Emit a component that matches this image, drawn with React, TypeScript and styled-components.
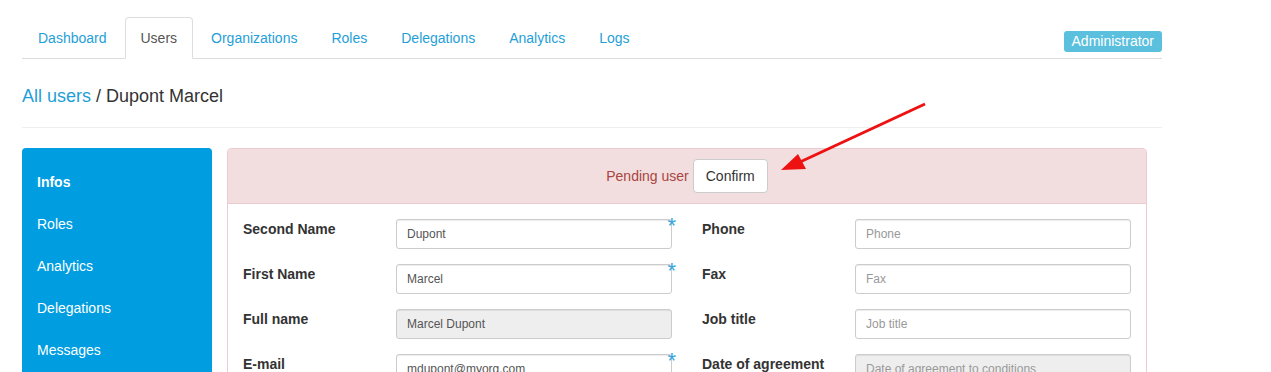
import React from "react";
import styled, { createGlobalStyle } from "styled-components";

const Global = createGlobalStyle`
  html, body { margin: 0; padding: 0; background: #fff; }
  body {
    font-family: "Liberation Sans", Arial, Helvetica, sans-serif;
    font-size: 14px;
    line-height: 20px;
    color: #333;
  }
  * { box-sizing: border-box; }
`;

const Page = styled.div`
  position: relative;
  width: 1162px;
  padding: 17px 0 0 22px;
`;

const Tabs = styled.nav`
  display: flex;
  align-items: flex-end;
  border-bottom: 1px solid #ddd;
`;

const Tab = styled.a<{ $active?: boolean }>`
  display: block;
  padding: 10px 15px;
  margin-right: 2px;
  margin-bottom: -1px;
  line-height: 20px;
  border: 1px solid ${(p) => (p.$active ? "#ddd" : "transparent")};
  border-bottom-color: ${(p) => (p.$active ? "#fff" : "transparent")};
  border-radius: 4px 4px 0 0;
  background: ${(p) => (p.$active ? "#fff" : "transparent")};
  color: ${(p) => (p.$active ? "#555" : "#1fa0d8")};
  text-decoration: none;
`;

const Badge = styled.span`
  margin-left: auto;
  margin-bottom: 6px;
  padding: 2px 8px 3px;
  font-size: 14px;
  line-height: 16px;
  color: #fff;
  background: #5bc0de;
  border-radius: 3px;
`;

const Breadcrumb = styled.div`
  padding: 27px 0 21px;
  font-size: 18px;
  line-height: 20px;
  color: #333;
  border-bottom: 1px solid #eee;
`;

const Crumb = styled.a`
  color: #1fa0d8;
  text-decoration: none;
`;

const Main = styled.div`
  display: flex;
  gap: 15px;
  margin-top: 20px;
  align-items: flex-start;
`;

const Sidebar = styled.ul`
  list-style: none;
  margin: 0;
  padding: 13px 0 40px;
  width: 190px;
  background: #009de0;
  border-radius: 4px;
`;

const SideItem = styled.li<{ $active?: boolean }>`
  padding: 11px 15px;
  line-height: 20px;
  color: #fff;
  font-weight: ${(p) => (p.$active ? 700 : 400)};
`;

const Panel = styled.section`
  width: 920px;
  border: 1px solid #ebccd1;
  border-radius: 4px;
`;

const PanelHeading = styled.div`
  display: flex;
  justify-content: center;
  align-items: center;
  gap: 4px;
  padding: 10px 15px;
  background: #f2dede;
  border-bottom: 1px solid #ebccd1;
  border-radius: 3px 3px 0 0;
`;

const Pending = styled.span`
  color: #a94442;
`;

const Button = styled.button`
  font-family: inherit;
  font-size: 14px;
  line-height: 20px;
  padding: 6px 12px;
  color: #333;
  background: #fff;
  border: 1px solid #ccc;
  border-radius: 4px;
`;

const PanelBody = styled.div`
  display: grid;
  grid-template-columns: 429px 429px;
  column-gap: 30px;
  row-gap: 15px;
  padding: 15px;
`;

const Field = styled.div`
  display: grid;
  grid-template-columns: 153px 276px;
`;

const Label = styled.label`
  font-weight: 700;
  line-height: 20px;
`;

const InputWrap = styled.div`
  position: relative;
`;

const Input = styled.input`
  display: block;
  width: 100%;
  height: 30px;
  padding: 5px 10px;
  font-family: inherit;
  font-size: 12px;
  color: #555;
  background: ${(p) => (p.disabled ? "#eee" : "#fff")};
  border: 1px solid #ccc;
  border-radius: 3px;
  box-shadow: inset 0 1px 1px rgba(0, 0, 0, 0.075);
  &::placeholder { color: #999; }
`;

const Required = styled.span`
  position: absolute;
  right: -4px;
  top: -4px;
  font-size: 22px;
  line-height: 22px;
  color: #36a6de;
`;

const Arrow = styled.svg`
  position: absolute;
  left: 0;
  top: 0;
  pointer-events: none;
`;

type F = { label: string; value?: string; placeholder?: string; disabled?: boolean; required?: boolean };

const fields: F[] = [
  { label: "Second Name", value: "Dupont", required: true },
  { label: "Phone", placeholder: "Phone" },
  { label: "First Name", value: "Marcel", required: true },
  { label: "Fax", placeholder: "Fax" },
  { label: "Full name", value: "Marcel Dupont", disabled: true },
  { label: "Job title", placeholder: "Job title" },
  { label: "E-mail", value: "mdupont@myorg.com", required: true },
  { label: "Date of agreement", placeholder: "Date of agreement to conditions", disabled: true },
];

export default function App() {
  return (
    <Page>
      <Global />
      <Tabs>
        {["Dashboard", "Users", "Organizations", "Roles", "Delegations", "Analytics", "Logs"].map((t) => (
          <Tab key={t} $active={t === "Users"}>{t}</Tab>
        ))}
        <Badge>Administrator</Badge>
      </Tabs>
      <Breadcrumb>
        <Crumb>All users</Crumb> / Dupont Marcel
      </Breadcrumb>
      <Main>
        <Sidebar>
          <SideItem $active>Infos</SideItem>
          <SideItem>Roles</SideItem>
          <SideItem>Analytics</SideItem>
          <SideItem>Delegations</SideItem>
          <SideItem>Messages</SideItem>
        </Sidebar>
        <Panel>
          <PanelHeading>
            <Pending>Pending user</Pending>
            <Button>Confirm</Button>
          </PanelHeading>
          <PanelBody>
            {fields.map((f) => (
              <Field key={f.label}>
                <Label>{f.label}</Label>
                <InputWrap>
                  <Input
                    defaultValue={f.value}
                    placeholder={f.placeholder}
                    disabled={f.disabled}
                    readOnly
                  />
                  {f.required && <Required>*</Required>}
                </InputWrap>
              </Field>
            ))}
          </PanelBody>
        </Panel>
      </Main>
      <Arrow width="1271" height="372" viewBox="0 0 1271 372">
        <line x1="925" y1="104" x2="800" y2="162" stroke="#ee1111" strokeWidth="3" />
        <polygon points="781,170 798,154 806,169" fill="#ee1111" />
      </Arrow>
    </Page>
  );
}
